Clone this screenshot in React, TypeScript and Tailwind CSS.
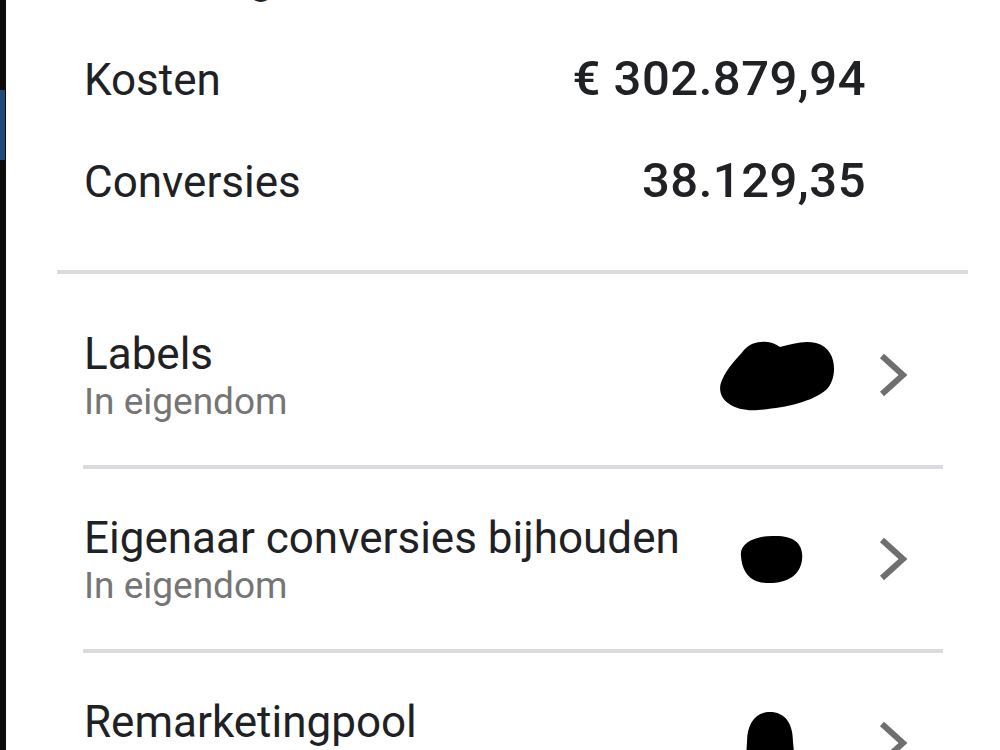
type Stat = { label: string; value: string };

type ListRow = {
  title: string;
  subtitle: string;
  blob: { w: number; h: number; d: string; mr: number };
};

const STATS: Stat[] = [
  { label: "Vertoningen", value: "12.486.270" },
  { label: "Kosten", value: "€ 302.879,94" },
  { label: "Conversies", value: "38.129,35" },
];

// redacted values are drawn as black marker blobs
const ROWS: ListRow[] = [
  {
    title: "Labels",
    subtitle: "In eigendom",
    blob: {
      w: 122,
      h: 74,
      mr: 42,
      d: "M8,42 C0,60 18,74 44,72 C70,70 98,64 112,52 C124,41 124,10 102,5 C90,2 78,6 66,9 C56,1 38,2 30,12 C24,20 14,28 8,42 Z",
    },
  },
  {
    title: "Eigenaar conversies bijhouden",
    subtitle: "In eigendom",
    blob: {
      w: 68,
      h: 50,
      mr: 74,
      d: "M5,22 C3,8 22,1 40,2 C58,2 68,10 66,26 C64,42 50,50 30,49 C13,48 6,37 5,22 Z",
    },
  },
  {
    title: "Remarketingpool",
    subtitle: "In eigendom",
    blob: {
      w: 52,
      h: 62,
      mr: 82,
      d: "M3,30 C3,10 13,0 26,0 C40,0 49,10 49,30 L52,62 L1,62 Z",
    },
  },
];

function Chevron() {
  return (
    <svg width="30" height="46" viewBox="0 0 30 46" className="shrink-0">
      <polyline points="4,4 25,23 4,42" fill="none" stroke="#6f6f6f" strokeWidth="6" strokeLinejoin="miter" />
    </svg>
  );
}

export default function App() {
  return (
    <div className="flex h-[750px] w-[1000px] overflow-hidden bg-white font-['Roboto','Noto_Sans',sans-serif]">
      {/* edge of the window behind */}
      <div className="flex w-[6px] shrink-0 flex-col bg-[#0b0b0b]">
        <div className="h-[90px]" />
        <div className="h-[70px] w-[5px] bg-[#1e4b7c]" />
      </div>

      <div className="flex-1">
        <div className="-mt-[74px] pl-[78px] pr-[134px]">
          {STATS.map((s) => (
            <div key={s.label} className="flex h-[102px] items-baseline justify-between">
              <span className="text-[44px] leading-[102px] text-[#202124]">{s.label}</span>
              <span className="text-[49px] font-medium leading-[102px] tracking-[0.5px] text-[#202124]">
                {s.value}
              </span>
            </div>
          ))}
        </div>

        <div className="ml-[51px] mt-[38px] h-[4px] w-[911px] bg-[#dadadf]" />

        <div className="pt-[11px]">
          {ROWS.map((r, i) => (
            <div key={r.title}>
              {i > 0 && <div className="ml-[77px] h-[4px] w-[860px] bg-[#dadadf]" />}
              <div className="ml-[77px] flex h-[180px] w-[860px] items-center pl-[1px] pr-[35px]">
                <div className="flex-1 pt-[2px]">
                  <div className="text-[44px] leading-[50px] text-[#202124]">{r.title}</div>
                  <div className="text-[37px] leading-[45px] text-[#757575]">{r.subtitle}</div>
                </div>
                <svg
                  width={r.blob.w}
                  height={r.blob.h}
                  viewBox={`0 0 ${r.blob.w} ${r.blob.h}`}
                  style={{ marginRight: r.blob.mr }}
                >
                  <path d={r.blob.d} fill="#000" />
                </svg>
                <Chevron />
              </div>
            </div>
          ))}
        </div>
      </div>
    </div>
  );
}
